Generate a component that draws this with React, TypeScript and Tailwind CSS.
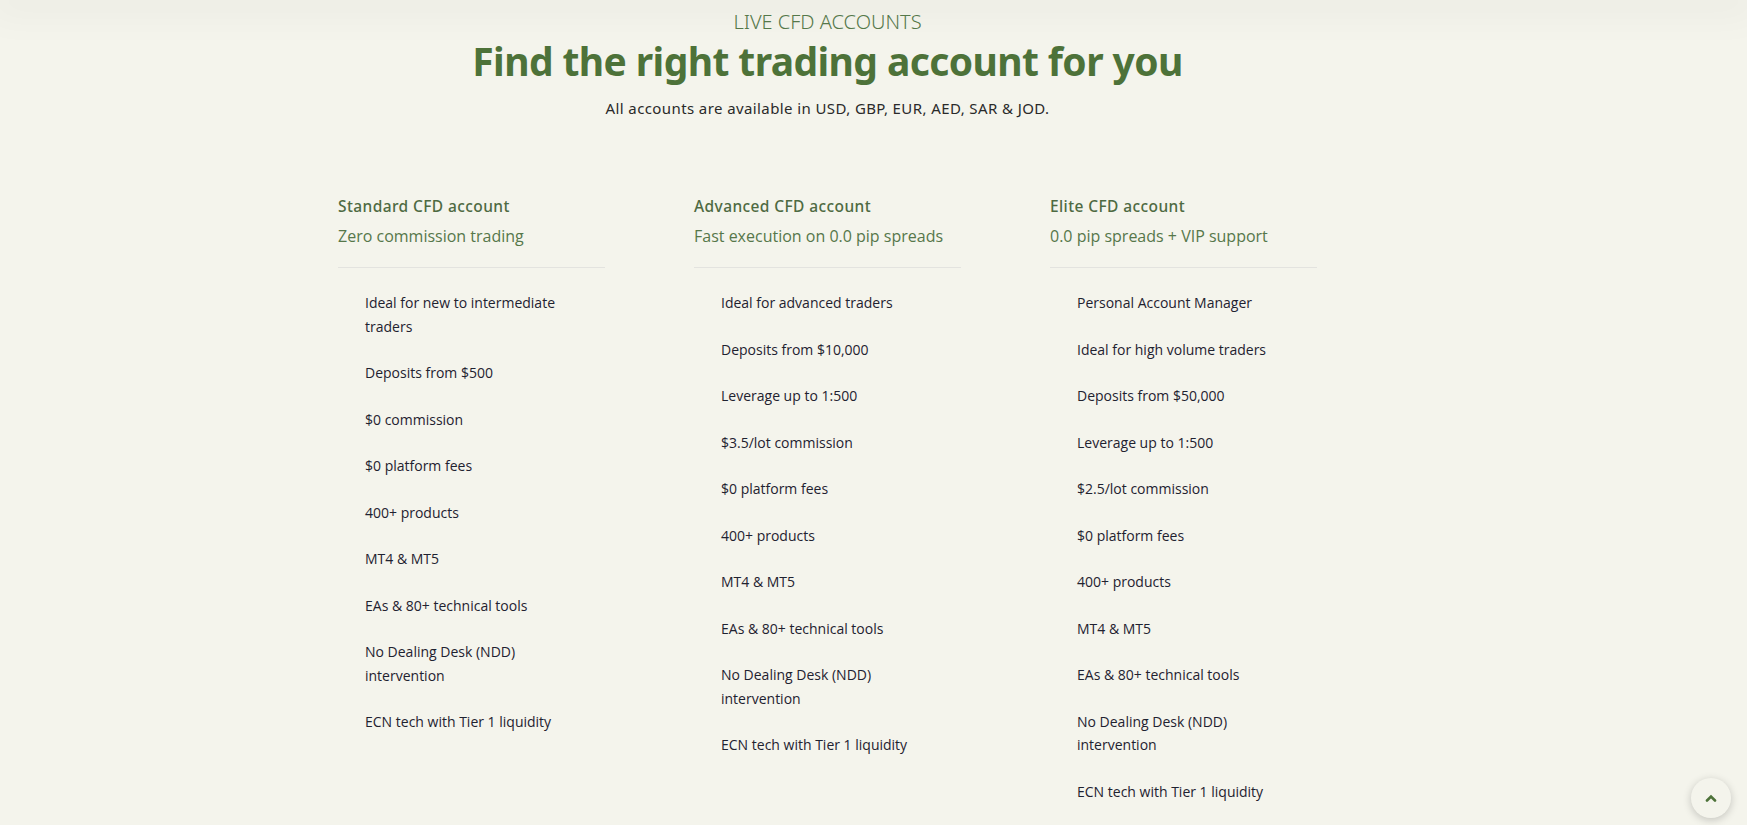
import React from "react";

const accounts = [
  {
    name: "Standard CFD account",
    tagline: "Zero commission trading",
    features: [
      "Ideal for new to intermediate traders",
      "Deposits from $500",
      "$0 commission",
      "$0 platform fees",
      "400+ products",
      "MT4 & MT5",
      "EAs & 80+ technical tools",
      "No Dealing Desk (NDD) intervention",
      "ECN tech with Tier 1 liquidity",
    ],
  },
  {
    name: "Advanced CFD account",
    tagline: "Fast execution on 0.0 pip spreads",
    features: [
      "Ideal for advanced traders",
      "Deposits from $10,000",
      "Leverage up to 1:500",
      "$3.5/lot commission",
      "$0 platform fees",
      "400+ products",
      "MT4 & MT5",
      "EAs & 80+ technical tools",
      "No Dealing Desk (NDD) intervention",
      "ECN tech with Tier 1 liquidity",
    ],
  },
  {
    name: "Elite CFD account",
    tagline: "0.0 pip spreads + VIP support",
    features: [
      "Personal Account Manager",
      "Ideal for high volume traders",
      "Deposits from $50,000",
      "Leverage up to 1:500",
      "$2.5/lot commission",
      "$0 platform fees",
      "400+ products",
      "MT4 & MT5",
      "EAs & 80+ technical tools",
      "No Dealing Desk (NDD) intervention",
      "ECN tech with Tier 1 liquidity",
    ],
  },
];

const App = () => {
  return (
    <div className="min-h-[825px] bg-[#f4f4ec] font-['Open_Sans',sans-serif]">
      <div className="h-0 shadow-[0_0_40px_12px_rgba(0,0,0,0.05)]" />
      <div className="pr-[92px]">
        <div className="flex flex-col items-center pt-[8px]">
          <p className="font-['Noto_Sans',sans-serif] font-light text-[20px] leading-[28px] text-[#55784a]">
            LIVE CFD ACCOUNTS
          </p>
          <h1 className="font-['Noto_Sans',sans-serif] font-bold text-[39px] leading-[50px] text-[#4d7239] tracking-[-0.6px]">
            Find the right trading account for you
          </h1>
          <p className="mt-[11px] font-['Noto_Sans',sans-serif] text-[15px] leading-[22px] tracking-[0.4px] text-[#2a2a2a]">
            All accounts are available in USD, GBP, EUR, AED, SAR &amp; JOD.
          </p>
        </div>

        <div className="mx-auto mt-[77px] grid w-[979px] grid-cols-3 gap-x-[89px]">
          {accounts.map((acc) => (
            <div key={acc.name} className="w-[267px]">
              <h3 className="font-['Noto_Sans',sans-serif] font-medium text-[15.5px] leading-[20px] tracking-[0.4px] text-[#4e6a42]">
                {acc.name}
              </h3>
              <p className="mt-[8px] text-[16px] leading-[24px] text-[#56774a]">
                {acc.tagline}
              </p>
              <div className="mt-[19px] border-t border-[#e3e3df]" />
              <ul className="mt-[23px] flex flex-col gap-[23px] pl-[27px] pr-[20px]">
                {acc.features.map((f) => (
                  <li key={f} className="text-[14px] leading-[23.5px] text-[#1f2230]">
                    {f}
                  </li>
                ))}
              </ul>
            </div>
          ))}
        </div>
      </div>

      <button className="fixed bottom-[7px] right-[16px] flex h-[40px] w-[40px] items-center justify-center rounded-full bg-[#f4f4ec] shadow-[0_2px_8px_rgba(0,0,0,0.2)]">
        <svg width="12" height="8" viewBox="0 0 12 8" fill="none">
          <path d="M2 6.5L6 2.5L10 6.5" stroke="#4d7239" strokeWidth="2.6" strokeLinecap="round" />
        </svg>
      </button>
    </div>
  );
};

export default App;
